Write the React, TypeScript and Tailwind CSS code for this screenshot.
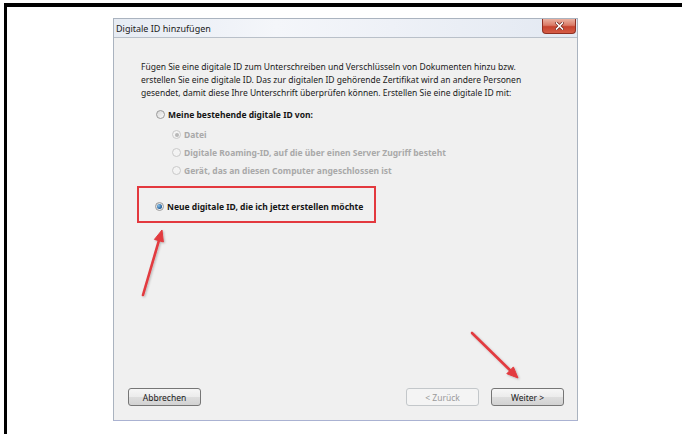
import React from "react";

type RadioProps = { checked?: boolean; disabled?: boolean };

function Radio({ checked, disabled }: RadioProps) {
  return (
    <span
      className={
        disabled
          ? "flex h-[9px] w-[9px] shrink-0 items-center justify-center rounded-full border border-[#c9c9c9] bg-[#f3f3f3]"
          : "flex h-[9px] w-[9px] shrink-0 items-center justify-center rounded-full border border-[#9a9a9a] bg-[linear-gradient(135deg,#d6d6d6,#fbfbfb)]"
      }
    >
      {checked && disabled && <span className="h-[4px] w-[4px] rounded-full bg-[#b8b8b8]" />}
      {checked && !disabled && (
        <span className="h-[5px] w-[5px] rounded-full bg-[radial-gradient(circle_at_35%_35%,#8cc3ec,#1d5a96_70%)]" />
      )}
    </span>
  );
}

function Option({
  label,
  checked,
  disabled,
  className,
}: RadioProps & { label: string; className: string }) {
  return (
    <div className={`flex h-[13px] items-center gap-[3px] ${className}`}>
      <Radio checked={checked} disabled={disabled} />
      <span
        className={
          disabled
            ? "whitespace-nowrap font-bold text-[#a9a9a9]"
            : "whitespace-nowrap font-bold text-[#151515]"
        }
      >
        {label}
      </span>
    </div>
  );
}

function WinButton({ label, disabled }: { label: string; disabled?: boolean }) {
  return (
    <div
      className={
        disabled
          ? "flex h-[18px] w-[73px] items-center justify-center rounded-[3px] border border-[#c3c7ca] bg-[#f4f4f4] text-[#9a9a9a]"
          : "flex h-[18px] w-[73px] items-center justify-center rounded-[3px] border border-[#767676] bg-[linear-gradient(180deg,#f6f6f6_0%,#ececec_48%,#dddddd_52%,#d2d2d2_100%)] text-[#1a1a1a]"
      }
    >
      {label}
    </div>
  );
}

function Arrows() {
  return (
    <svg
      className="pointer-events-none absolute left-0 top-0"
      width="682"
      height="434"
      viewBox="0 0 682 434"
    >
      <defs>
        <filter id="arrowShadow" x="-20%" y="-20%" width="140%" height="140%">
          <feDropShadow dx="1" dy="1" stdDeviation="0.8" floodColor="#000" floodOpacity="0.25" />
        </filter>
      </defs>
      <g fill="#e23b3f" stroke="#e23b3f" filter="url(#arrowShadow)">
        {/* upward arrow toward the selected option */}
        <line x1="143" y1="295" x2="158.9" y2="240.6" strokeWidth="2.6" strokeLinecap="round" />
        <polygon points="162,230 163.4,242 154.4,239.4" strokeWidth="1" strokeLinejoin="round" />
        {/* downward arrow toward the next button */}
        <line x1="472" y1="333" x2="510.1" y2="370.3" strokeWidth="2.6" strokeLinecap="round" />
        <polygon points="518,378 506.8,373.7 513.4,366.9" strokeWidth="1" strokeLinejoin="round" />
      </g>
    </svg>
  );
}

export default function App() {
  return (
    <div className="relative h-[434px] w-[682px] overflow-hidden bg-white pl-[4px] pt-[3px] font-['Noto_Sans',sans-serif] text-[8.5px]">
      <div className="h-full border-l-[3px] border-t-4 border-black pl-[106px] pt-[11px]">
        {/* dialog window */}
        <div className="flex h-[403px] w-[465px] flex-col border border-[#aab3bf] border-b-[#aab2d2] bg-[#f0f0f0]">
          {/* title bar */}
          <div className="flex h-[19px] shrink-0 items-start justify-between border-b border-[#b9c0c9] bg-[linear-gradient(90deg,#e6ebf3_0%,#f4f6fa_35%,#eef1f7_60%,#e3e9f2_100%)]">
            <span className="pl-[2px] pt-[4px] text-[9px] leading-[11px] text-[#1b1b1b]">
              Digitale ID hinzufügen
            </span>
            <div className="mr-[1px] flex h-[15px] w-[34px] items-center justify-center rounded-b-[4px] border border-t-0 border-[#8f2f22] bg-[linear-gradient(180deg,#eab0a0_0%,#da7a66_45%,#c6432e_55%,#d55c45_100%)]">
              <svg width="9" height="8" viewBox="0 0 9 8">
                <path d="M1.5 1 L7.5 7 M7.5 1 L1.5 7" stroke="#6b2218" strokeWidth="3" strokeLinecap="square" />
                <path d="M1.5 1 L7.5 7 M7.5 1 L1.5 7" stroke="#ffffff" strokeWidth="1.6" strokeLinecap="square" />
              </svg>
            </div>
          </div>

          {/* dialog body */}
          <div className="flex flex-1 flex-col pl-[27px] pt-[22px] leading-[13px]">
            <p className="whitespace-nowrap text-[#1a1a1a]">
              Fügen Sie eine digitale ID zum Unterschreiben und Verschlüsseln von Dokumenten hinzu bzw.
              <br />
              erstellen Sie eine digitale ID. Das zur digitalen ID gehörende Zertifikat wird an andere Personen
              <br />
              gesendet, damit diese Ihre Unterschrift überprüfen können. Erstellen Sie eine digitale ID mit:
            </p>

            <Option className="ml-[15px] mt-[9px]" label="Meine bestehende digitale ID von:" />
            <Option className="ml-[31px] mt-[7px]" label="Datei" checked disabled />
            <Option
              className="ml-[31px] mt-[5px]"
              label="Digitale Roaming-ID, auf die über einen Server Zugriff besteht"
              disabled
            />
            <Option
              className="ml-[31px] mt-[5px]"
              label="Gerät, das an diesen Computer angeschlossen ist"
              disabled
            />

            <div className="-ml-[4px] mt-[9px] flex h-[37px] w-[239px] items-center border-2 border-[#e3393e] pl-[16px] pt-[3px]">
              <Option className="" label="Neue digitale ID, die ich jetzt erstellen möchte" checked />
            </div>

            <div className="flex-1" />

            <div className="-ml-[13px] flex items-center justify-between pb-[14px] pr-[13px]">
              <WinButton label="Abbrechen" />
              <div className="flex gap-[12px]">
                <WinButton label="< Zurück" disabled />
                <WinButton label="Weiter >" />
              </div>
            </div>
          </div>
        </div>
      </div>
      <Arrows />
    </div>
  );
}
